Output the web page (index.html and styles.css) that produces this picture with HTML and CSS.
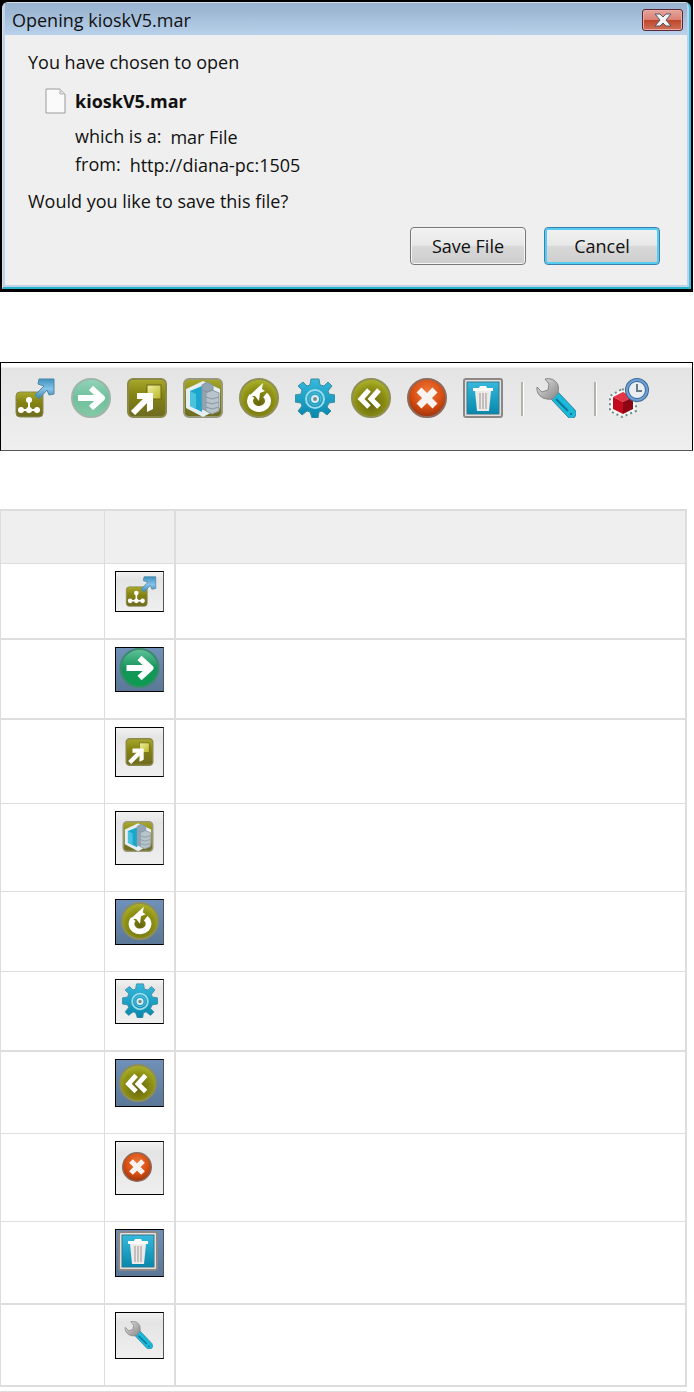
FILE: index.html
```html
<!DOCTYPE html>
<html lang="en">
<head>
    <meta charset="UTF-8">
    <meta name="viewport" content="width=device-width, initial-scale=1.0">
    <title>Opening kioskV5.mar</title>
    <link rel="stylesheet" href="styles.css">
</head>
<body>
    <!-- Shared icons -->
    <svg class="sprite" aria-hidden="true">
        <defs>
            <linearGradient id="olive" x1="0" y1="0" x2="0" y2="1">
                <stop offset="0" stop-color="#a9a92c"/>
                <stop offset="0.4" stop-color="#868412"/>
                <stop offset="1" stop-color="#6d6b22"/>
            </linearGradient>
            <radialGradient id="olive-round" cx="0.5" cy="0.65" r="0.7">
                <stop offset="0" stop-color="#65650c"/>
                <stop offset="0.6" stop-color="#8f9214"/>
                <stop offset="1" stop-color="#b6bd35"/>
            </radialGradient>
            <linearGradient id="lime" x1="0" y1="0" x2="1" y2="1">
                <stop offset="0" stop-color="#f1f0a0"/>
                <stop offset="1" stop-color="#b8b526"/>
            </linearGradient>
            <linearGradient id="sky" x1="0" y1="0" x2="0" y2="1">
                <stop offset="0" stop-color="#3d92bd"/>
                <stop offset="0.5" stop-color="#86c3ea"/>
                <stop offset="1" stop-color="#3a83a8"/>
            </linearGradient>
            <linearGradient id="mint" x1="0" y1="0" x2="0" y2="1">
                <stop offset="0" stop-color="#93d3b9"/>
                <stop offset="0.5" stop-color="#6fc09c"/>
                <stop offset="1" stop-color="#85c9a5"/>
            </linearGradient>
            <linearGradient id="green" x1="0" y1="0" x2="0" y2="1">
                <stop offset="0" stop-color="#62c29b"/>
                <stop offset="0.5" stop-color="#14955a"/>
                <stop offset="1" stop-color="#0b9c50"/>
            </linearGradient>
            <linearGradient id="teal" x1="0" y1="0" x2="0" y2="1">
                <stop offset="0" stop-color="#36b9dc"/>
                <stop offset="1" stop-color="#0787ac"/>
            </linearGradient>
            <radialGradient id="orange" cx="0.5" cy="0.35" r="0.65">
                <stop offset="0" stop-color="#ef7a3d"/>
                <stop offset="0.6" stop-color="#d94e12"/>
                <stop offset="1" stop-color="#9e3209"/>
            </radialGradient>
            <linearGradient id="steel" x1="0" y1="0" x2="1" y2="1">
                <stop offset="0" stop-color="#e4e4e4"/>
                <stop offset="1" stop-color="#858585"/>
            </linearGradient>
        </defs>

        <symbol id="icon-export" viewBox="0 0 40 40">
            <rect x="1" y="14" width="27" height="25" rx="4" fill="url(#olive)" stroke="#8a8a52"/>
            <path d="M14 23v9M6 32h17" stroke="#fff" stroke-width="2"/>
            <g fill="#fff">
                <circle cx="14" cy="22" r="3"/>
                <circle cx="6" cy="32" r="3"/>
                <circle cx="14" cy="32" r="3"/>
                <circle cx="22" cy="32" r="3"/>
            </g>
            <path d="M20 17L29 8 23 6 24 1H39V16L34 17 32 12 24 21z" fill="url(#sky)" stroke="#4c87a8"/>
        </symbol>

        <symbol id="icon-next-light" viewBox="0 0 40 40">
            <circle cx="20" cy="20" r="19" fill="url(#mint)" stroke="#9fb5a9" stroke-width="2"/>
            <path d="M7 20H31M20 10L31 20 20 30" fill="none" stroke="#fff" stroke-width="6" stroke-linejoin="round"/>
        </symbol>

        <symbol id="icon-next" viewBox="0 0 40 40">
            <circle cx="20" cy="20" r="19" fill="url(#green)" stroke="#3c8a6c" stroke-width="2"/>
            <path d="M7 20H31M20 10L31 20 20 30" fill="none" stroke="#fff" stroke-width="6" stroke-linejoin="round"/>
        </symbol>

        <symbol id="icon-open" viewBox="0 0 40 40">
            <rect x="1" y="1" width="38" height="38" rx="5" fill="url(#olive)" stroke="#8b8949" stroke-width="2"/>
            <rect x="20" y="7" width="14" height="14" fill="url(#lime)" stroke="#6a6718"/>
            <path d="M6 35L21 20" stroke="#fff" stroke-width="6"/>
            <path d="M10 15H26V31L20 34V21H10z" fill="#fff"/>
        </symbol>

        <symbol id="icon-package" viewBox="0 0 40 40">
            <rect x="1" y="1" width="38" height="38" rx="5" fill="url(#olive)" stroke="#999878" stroke-width="2"/>
            <path d="M20 3L37 11V30L20 39 3 30V11z" fill="#e5eef2"/>
            <path d="M7 13L19 8V34L7 28z" fill="#1ba7cd"/>
            <path d="M7 13L13 16V31L7 28z" fill="#4bc3df"/>
            <path d="M19 7L24 4 30 7V31L24 33 19 31z" fill="#93a5b2" stroke="#8696a0"/>
            <path d="M23 15L29 12 36 15V33L29 36 23 33z" fill="#b7c4cc" stroke="#8c9aa3"/>
            <path d="M23 19L29 21 36 19M23 24L29 26 36 24M23 29L29 31 36 29M19 12L24 14 30 12" fill="none" stroke="#8696a0"/>
        </symbol>

        <symbol id="icon-refresh" viewBox="0 0 40 40">
            <circle cx="20" cy="20" r="19" fill="url(#olive-round)" stroke="#8e8e55" stroke-width="2"/>
            <path d="M26 17A9 8 0 1 1 13 18" fill="none" stroke="#fff" stroke-width="6"/>
            <path d="M10 18L24 5 23 11 26 13 21 15 20 23 16 18z" fill="#fff"/>
        </symbol>

        <symbol id="icon-gear" viewBox="0 0 40 40">
            <path d="M16 1H24L25 7 29 8 33 4 37 8 33 13 34 16 40 17V24L34 25 32 29 36 33 32 37 27 33 24 34 23 40H17L15 34 12 33 7 37 3 33 7 28 6 25 0 24V17L6 16 7 12 3 8 8 4 12 8 15 7z" fill="url(#teal)" stroke="#3c8da2"/>
            <circle cx="20" cy="21" r="9" fill="none" stroke="#9bdcec" stroke-width="2"/>
            <circle cx="20" cy="21" r="6" fill="none" stroke="#64bfd6"/>
            <circle cx="20" cy="21" r="3" fill="#7d8b90" stroke="#d9eef3" stroke-width="2"/>
        </symbol>

        <symbol id="icon-back" viewBox="0 0 40 40">
            <circle cx="20" cy="20" r="19" fill="url(#olive-round)" stroke="#8e8e55" stroke-width="2"/>
            <path d="M18 12L10 21 18 29M28 12L20 21 28 29" fill="none" stroke="#fff" stroke-width="5"/>
        </symbol>

        <symbol id="icon-stop" viewBox="0 0 40 40">
            <circle cx="20" cy="20" r="19" fill="url(#orange)" stroke="#8c6a5c" stroke-width="2"/>
            <path d="M12 12L28 28M28 12L12 28" stroke="#f7f3f0" stroke-width="7"/>
        </symbol>

        <symbol id="icon-trash" viewBox="0 0 40 40">
            <rect x="1" y="1" width="38" height="38" rx="2" fill="#e4e0de" stroke="#8d8785" stroke-width="2"/>
            <rect x="4" y="4" width="32" height="32" fill="url(#teal)" stroke="#34798e"/>
            <path d="M12 13H28L26 33H14z" fill="#eeeae8"/>
            <path d="M10 10H16L17 8H23L24 10H30V13H10z" fill="#fbfbfb"/>
            <path d="M17 15V31M20 15V31M23 15V31" stroke="#c4bfbc" stroke-width="2"/>
        </symbol>

        <symbol id="icon-wrench" viewBox="0 0 40 40">
            <path d="M15 21L22 14 39 32Q42 38 37 40 34 41 32 39z" fill="#18b9da" stroke="#38849a"/>
            <path d="M20 21L32 33" stroke="#0e7896" stroke-width="2"/>
            <circle cx="35" cy="36" r="1" fill="#0f5f78"/>
            <path d="M9 1Q18 -1 22 7 23 12 22 15L17 21Q12 22 7 20 0 16 1 9L6 14 12 12 13 6z" fill="url(#steel)" stroke="#858585"/>
        </symbol>

        <symbol id="icon-schedule" viewBox="0 0 40 40">
            <path d="M13 11L27 18V33L13 39 1 33V18z" fill="#f3f7f6" stroke="#718d88" stroke-dasharray="2 3" stroke-width="2"/>
            <path d="M14 14L24 19 14 24 4 19z" fill="#e63447"/>
            <path d="M4 19L14 24V36L4 31z" fill="#c20c1e"/>
            <path d="M24 19L14 24V36L24 31z" fill="#8e0614"/>
            <circle cx="28" cy="12" r="10" fill="#e9eef3" stroke="#39699b" stroke-width="4"/>
            <circle cx="28" cy="12" r="10" fill="none" stroke="#6fa0d0" stroke-width="2"/>
            <path d="M28 6V13H33" fill="none" stroke="#6c7a86" stroke-width="2"/>
        </symbol>
    </svg>

    <div class="dialog" role="dialog" aria-labelledby="dialog-title">
        <div class="dialog-window">
            <div class="title-bar">
                <span id="dialog-title">Opening kioskV5.mar</span>
                <button class="close" aria-label="Close">
                    <svg viewBox="0 0 18 14"><path d="M1 1H6L9 4 12 1H17L12 7 17 13H12L9 10 6 13H1L6 7z" fill="#f4f4f4" stroke="#525668"/></svg>
                </button>
            </div>
            <div class="dialog-body">
                <p>You have chosen to open</p>
                <div class="file">
                    <svg class="file-icon" viewBox="0 0 21 26"><path d="M1 1H15L20 6V25H1z" fill="#fafafa" stroke="#9a9a9a"/><path d="M15 1V6H20" fill="#ddd" stroke="#b5b5b5"/></svg>
                    <strong>kioskV5.mar</strong>
                </div>
                <dl>
                    <div><dt>which is a:</dt><dd>mar File</dd></div>
                    <div><dt>from:</dt><dd>http://diana-pc:1505</dd></div>
                </dl>
                <p>Would you like to save this file?</p>
                <div class="actions">
                    <button class="btn">Save File</button>
                    <button class="btn btn-default">Cancel</button>
                </div>
            </div>
        </div>
    </div>

    <div class="toolbar" role="toolbar">
        <div class="group">
            <button aria-label="Export"><svg><use href="#icon-export"/></svg></button>
            <button aria-label="Next"><svg><use href="#icon-next-light"/></svg></button>
            <button aria-label="Open"><svg><use href="#icon-open"/></svg></button>
            <button aria-label="Package"><svg><use href="#icon-package"/></svg></button>
            <button aria-label="Refresh"><svg><use href="#icon-refresh"/></svg></button>
            <button aria-label="Configure"><svg><use href="#icon-gear"/></svg></button>
            <button aria-label="Back"><svg><use href="#icon-back"/></svg></button>
            <button aria-label="Stop"><svg><use href="#icon-stop"/></svg></button>
            <button aria-label="Delete"><svg><use href="#icon-trash"/></svg></button>
        </div>
        <div class="group">
            <button aria-label="Tools"><svg><use href="#icon-wrench"/></svg></button>
        </div>
        <div class="group">
            <button aria-label="Schedule"><svg><use href="#icon-schedule"/></svg></button>
        </div>
    </div>

    <table class="icons">
        <thead>
            <tr><th class="name"></th><th class="icon"></th><th></th></tr>
        </thead>
        <tbody>
            <tr class="thick"><td></td><td><div class="thumb export"><svg><use href="#icon-export"/></svg></div></td><td></td></tr>
            <tr class="thick"><td></td><td><div class="thumb blue next"><svg><use href="#icon-next"/></svg></div></td><td></td></tr>
            <tr><td></td><td><div class="thumb open"><svg><use href="#icon-open"/></svg></div></td><td></td></tr>
            <tr><td></td><td><div class="thumb package"><svg><use href="#icon-package"/></svg></div></td><td></td></tr>
            <tr><td></td><td><div class="thumb blue refresh"><svg><use href="#icon-refresh"/></svg></div></td><td></td></tr>
            <tr class="thick"><td></td><td><div class="thumb gear"><svg><use href="#icon-gear"/></svg></div></td><td></td></tr>
            <tr><td></td><td><div class="thumb blue back"><svg><use href="#icon-back"/></svg></div></td><td></td></tr>
            <tr><td></td><td><div class="thumb stop"><svg><use href="#icon-stop"/></svg></div></td><td></td></tr>
            <tr class="thick"><td></td><td><div class="thumb blue trash"><svg><use href="#icon-trash"/></svg></div></td><td></td></tr>
            <tr class="thick"><td></td><td><div class="thumb wrench"><svg><use href="#icon-wrench"/></svg></div></td><td></td></tr>
        </tbody>
    </table>
    <hr>
</body>
</html>
```
FILE: styles.css
```css
* {
    box-sizing: border-box;
}
body {
    margin: 0;
    background: #fff;
    color: #111;
    font-family: "Open Sans", "Noto Sans", sans-serif;
    font-size: 18px;
    line-height: 24px;
}
svg {
    display: block;
}
button {
    font: inherit;
    color: inherit;
    cursor: pointer;
}
.sprite {
    width: 0;
    height: 0;
}

/* Dialog */
.dialog {
    margin-right: 1px;
    padding: 2px 2px 3px;
    background: #000;
}
.dialog-window {
    border: 1px solid #d5dce2;
    border-right: 2px solid #3fbfe0;
    border-bottom: 2px solid #25b4cb;
    border-radius: 6px 6px 0 0;
    background: #bcd3ea;
    padding: 0 2px 2px;
}
.title-bar {
    display: flex;
    justify-content: space-between;
    align-items: center;
    height: 32px;
    padding: 2px 4px 0 7px;
    background: linear-gradient(#98b3d0, #9fb9d5 30%, #b9d1eb);
}
.close {
    display: flex;
    align-items: center;
    justify-content: center;
    width: 41px;
    height: 22px;
    padding: 0;
    border: 1px solid #5c2834;
    border-radius: 3px;
    box-shadow: inset 0 0 0 1px #e8aaa4;
    background: linear-gradient(#e5a49b, #d98274 48%, #bd4528 50%, #d07058);
}
.close svg {
    width: 18px;
    height: 14px;
}
.dialog-body {
    padding: 15px 27px 20px 23px;
    background: #efefef;
}
.dialog p,
.dialog dl {
    margin: 0;
}
.file {
    display: flex;
    align-items: center;
    gap: 9px;
    margin: 14px 0 10px 17px;
}
.file-icon {
    width: 21px;
    height: 26px;
}
dl {
    padding: 0 0 9px 47px;
}
dl div {
    display: flex;
    gap: 9px;
    height: 28px;
}
dd {
    margin: 1px 0 0;
}
.actions {
    display: flex;
    justify-content: flex-end;
    gap: 18px;
    margin-top: 14px;
}
.btn {
    width: 116px;
    height: 38px;
    padding: 0;
    border: 1px solid #777;
    border-radius: 4px;
    box-shadow: inset 0 0 0 1px #f6f6f6;
    background: linear-gradient(#f2f2f2, #e8e8e8 48%, #d9d9d9 50%, #cdcdcd);
}
.btn-default {
    border-color: #3c7fb1;
    box-shadow: inset 0 0 0 2px #55cdf0;
}

/* Toolbar */
.toolbar {
    display: flex;
    margin: 70px 1px 58px 0;
    padding: 15px 14px 32px;
    border: 1px solid #000;
    border-bottom-color: #555;
    background: linear-gradient(#fff 4px, #e4e4e4 5px, #efefef);
}
.group {
    display: flex;
    gap: 16px;
}
.group + .group::before {
    content: "";
    height: 34px;
    margin: 4px -4px 0 18px;
    border-left: 2px solid #b5b2a6;
    border-right: 1px solid #fff;
}
.toolbar button {
    padding: 0;
    border: 0;
    background: none;
}
.toolbar svg {
    width: 40px;
    height: 40px;
}

/* Icon table */
.icons {
    width: calc(100% - 7px);
    table-layout: fixed;
    border: solid #ddd;
    border-width: 2px 0 0 1px;
    border-spacing: 0;
}
.icons th,
.icons td {
    padding: 7px 10px 26px;
    border: solid #ddd;
    border-width: 0 2px 1px 0;
    vertical-align: top;
}
.icons th {
    height: 53px;
    padding: 0;
    background: #efefef;
}
.icons th:first-child,
.icons td:first-child {
    border-right-width: 1px;
}
.icons .thick td {
    border-bottom-width: 2px;
}
.icons .name {
    width: 104px;
}
.icons .icon {
    width: 71px;
}
.thumb {
    border: 1px solid #000;
    border-right-color: #555;
    background: linear-gradient(#f2f2f2, #e4e4e4 20%, #efefef);
}
.thumb.blue {
    background: linear-gradient(#6f90b8, #5b7898);
}
.thumb svg {
    width: 100%;
    height: 100%;
}
.export {
    height: 41px;
    padding: 4px 6px 4px 9px;
}
.next {
    height: 45px;
    padding: 0 3px 3px;
}
.open {
    height: 50px;
    padding: 10px 9px;
}
.package {
    height: 54px;
    padding: 9px 9px 12px 6px;
}
.refresh {
    height: 46px;
    padding: 2px 4px 4px 5px;
}
.gear {
    height: 45px;
    padding: 3px 5px 5px 6px;
}
.back {
    height: 48px;
    padding: 4px 6px 4px 3px;
}
.stop {
    height: 54px;
    padding: 10px 11px 12px 6px;
}
.trash {
    height: 48px;
    padding: 1px 5px 5px 2px;
}
.wrench {
    height: 47px;
    padding: 8px 10px 9px 8px;
}
hr {
    width: calc(100% - 7px);
    margin: 4px 0 0;
    border: 0;
    border-top: 1px solid #ddd;
}
```
